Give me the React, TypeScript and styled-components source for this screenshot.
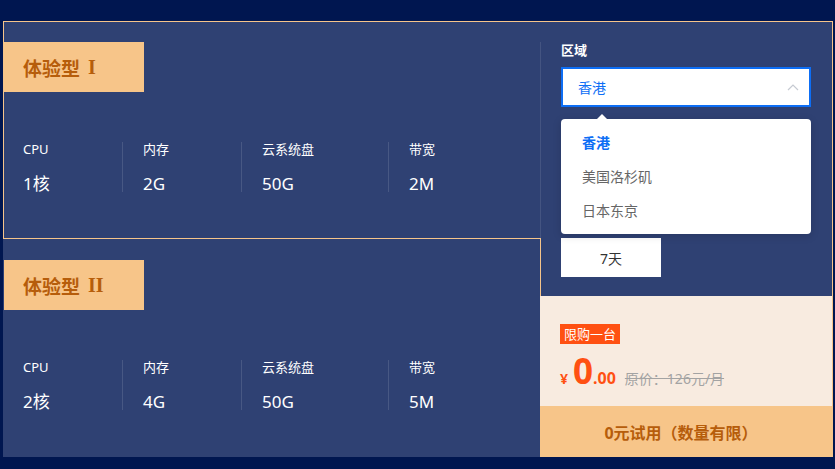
import React from "react";
import styled, { createGlobalStyle } from "styled-components";

const GlobalStyle = createGlobalStyle`
  body {
    margin: 0;
    background-color: #001650;
    font-family: "Noto Sans", "Noto Sans CJK SC", sans-serif;
  }
`;

const Page = styled.div`
  box-sizing: border-box;
  min-height: 100vh;
  padding: 21px 0 0 3px;
`;

const Wrapper = styled.div`
  display: flex;
  width: 830px;
  height: 436px;
`;

const CardList = styled.div`
  display: flex;
  flex-direction: column;
  width: 537px;
`;

const Card = styled.div<{ $active?: boolean }>`
  position: relative;
  box-sizing: border-box;
  height: 218px;
  width: ${(p) => (p.$active ? "538px" : "537px")};
  margin-right: ${(p) => (p.$active ? "-1px" : "0")};
  z-index: ${(p) => (p.$active ? 1 : 0)};
  background-color: #2f4173;
  border: 1px solid ${(p) => (p.$active ? "#f6c48a" : "transparent")};
  border-right: none;
  padding-top: 20px;

  ${(p) =>
    p.$active &&
    `
    &::after {
      content: "";
      position: absolute;
      right: 0;
      top: 20px;
      bottom: 0;
      width: 1px;
      background-color: rgba(255, 255, 255, 0.1);
    }
  `}
`;

const Badge = styled.div`
  display: flex;
  align-items: center;
  box-sizing: border-box;
  width: 140px;
  height: 50px;
  padding-left: 19px;
  background-color: #f7c589;
  color: #b65d0b;
  font-family: "Noto Sans CJK SC", sans-serif;
  font-size: 19px;
  font-weight: 700;
`;

const Numeral = styled.span`
  margin-left: 8px;
  font-family: "Liberation Serif", serif;
  font-size: 20px;
  font-weight: 700;
`;

const Stats = styled.div`
  display: flex;
  margin-top: 50px;
  padding-left: 19px;
`;

const Stat = styled.div<{ $w?: number; $first?: boolean }>`
  box-sizing: border-box;
  width: ${(p) => (p.$w ? `${p.$w}px` : "auto")};
  height: 50px;
  padding-left: ${(p) => (p.$first ? "0" : "20px")};
  border-left: ${(p) => (p.$first ? "none" : "1px solid rgba(255, 255, 255, 0.12)")};
  color: #ffffff;
`;

const StatLabel = styled.div`
  font-size: 13px;
  line-height: 14px;
`;

const StatValue = styled.div`
  margin-top: 19px;
  font-size: 17px;
  line-height: 18px;
`;

const Panel = styled.div`
  display: flex;
  flex-direction: column;
  box-sizing: border-box;
  width: 293px;
  border: 1px solid #f6c48a;
  border-bottom: none;
`;

const Form = styled.div`
  box-sizing: border-box;
  height: 274px;
  padding: 21px 0 0 20px;
  background-color: #2f4173;
`;

const FieldLabel = styled.div`
  color: #ffffff;
  font-size: 13px;
  line-height: 14px;
  font-weight: 700;
`;

const SelectWrap = styled.div`
  position: relative;
  margin-top: 10px;
  width: 250px;
`;

const SelectBox = styled.div`
  display: flex;
  align-items: center;
  justify-content: space-between;
  box-sizing: border-box;
  height: 40px;
  padding: 0 10px 0 15px;
  background-color: #ffffff;
  border: 2px solid #0d6ef5;
  color: #0d6ef5;
  font-size: 14px;
`;

const Dropdown = styled.ul`
  position: absolute;
  top: 52px;
  left: 0;
  z-index: 5;
  box-sizing: border-box;
  width: 250px;
  margin: 0;
  padding: 7px 0 6px;
  list-style: none;
  background-color: #ffffff;
  border-radius: 4px;
  box-shadow: 0 2px 8px rgba(0, 0, 0, 0.15);

  &::before {
    content: "";
    position: absolute;
    top: -5px;
    left: 36px;
    border-left: 5px solid transparent;
    border-right: 5px solid transparent;
    border-bottom: 5px solid #ffffff;
  }
`;

const Option = styled.li<{ $selected?: boolean }>`
  padding-left: 21px;
  height: 34px;
  line-height: 34px;
  font-size: 14px;
  color: ${(p) => (p.$selected ? "#0d6ef5" : "#666666")};
  font-weight: ${(p) => (p.$selected ? 700 : 400)};
`;

/* area covered by the open dropdown */
const Hidden = styled.div`
  height: 131px;
`;

const ChoiceRow = styled.div`
  display: flex;
  gap: 10px;
`;

const Choice = styled.div`
  display: flex;
  align-items: center;
  justify-content: center;
  width: 100px;
  height: 39px;
  background-color: #ffffff;
  color: #333333;
  font-size: 14px;
`;

const PriceArea = styled.div`
  box-sizing: border-box;
  height: 110px;
  margin-left: -1px;
  padding: 26px 0 0 20px;
  background-color: #f8ebe0;
`;

const Tag = styled.span`
  display: inline-block;
  height: 20px;
  line-height: 20px;
  padding: 0 4px;
  background-color: #ff5012;
  color: #ffffff;
  font-size: 13px;
`;

const PriceRow = styled.div`
  display: flex;
  align-items: baseline;
  margin-top: 7px;
  color: #ff5012;
  font-weight: 700;
`;

const Currency = styled.span`
  font-size: 14px;
  margin-right: 5px;
`;

const Amount = styled.span`
  font-size: 35px;
  line-height: 40px;
`;

const Cents = styled.span`
  font-size: 16px;
`;

const Original = styled.span`
  margin-left: 9px;
  color: #a3a3a3;
  font-size: 14px;
  font-weight: 400;
  text-decoration: line-through;
`;

const TryButton = styled.button`
  height: 51px;
  margin-left: -1px;
  border: none;
  padding: 0 10px 0 0;
  background-color: #f7c589;
  color: #b65d0b;
  font-family: inherit;
  font-size: 16px;
  font-weight: 700;
  cursor: pointer;
`;

const ChevronUp = () => (
  <svg width="12" height="7" viewBox="0 0 12 7" fill="none">
    <polyline points="1,6 6,1 11,6" stroke="#c6cad2" strokeWidth="1.2" />
  </svg>
);

type Plan = {
  name: string;
  numeral: string;
  cpu: string;
  mem: string;
  disk: string;
  bw: string;
};

const plans: Plan[] = [
  { name: "体验型", numeral: "I", cpu: "1核", mem: "2G", disk: "50G", bw: "2M" },
  { name: "体验型", numeral: "II", cpu: "2核", mem: "4G", disk: "50G", bw: "5M" },
];

function PlanCard({ plan, active }: { plan: Plan; active?: boolean }) {
  return (
    <Card $active={active}>
      <Badge>
        {plan.name}
        <Numeral>{plan.numeral}</Numeral>
      </Badge>
      <Stats>
        <Stat $w={99} $first>
          <StatLabel>CPU</StatLabel>
          <StatValue>{plan.cpu}</StatValue>
        </Stat>
        <Stat $w={119}>
          <StatLabel>内存</StatLabel>
          <StatValue>{plan.mem}</StatValue>
        </Stat>
        <Stat $w={147}>
          <StatLabel>云系统盘</StatLabel>
          <StatValue>{plan.disk}</StatValue>
        </Stat>
        <Stat>
          <StatLabel>带宽</StatLabel>
          <StatValue>{plan.bw}</StatValue>
        </Stat>
      </Stats>
    </Card>
  );
}

export default function App() {
  return (
    <>
      <GlobalStyle />
      <Page>
        <Wrapper>
          <CardList>
            <PlanCard plan={plans[0]} active />
            <PlanCard plan={plans[1]} />
          </CardList>
          <Panel>
            <Form>
              <FieldLabel>区域</FieldLabel>
              <SelectWrap>
                <SelectBox>
                  香港
                  <ChevronUp />
                </SelectBox>
                <Dropdown>
                  <Option $selected>香港</Option>
                  <Option>美国洛杉矶</Option>
                  <Option>日本东京</Option>
                </Dropdown>
              </SelectWrap>
              <Hidden />
              <ChoiceRow>
                <Choice>7天</Choice>
              </ChoiceRow>
            </Form>
            <PriceArea>
              <Tag>限购一台</Tag>
              <PriceRow>
                <Currency>¥</Currency>
                <Amount>0</Amount>
                <Cents>.00</Cents>
                <Original>原价：126元/月</Original>
              </PriceRow>
            </PriceArea>
            <TryButton>0元试用（数量有限）</TryButton>
          </Panel>
        </Wrapper>
      </Page>
    </>
  );
}
